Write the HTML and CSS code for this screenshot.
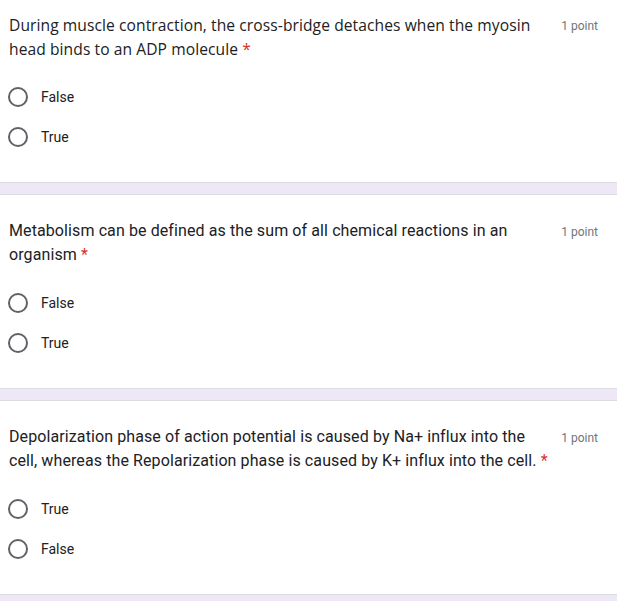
FILE: index.html
```html
<!DOCTYPE html>
<html>
<head>
<meta charset="utf-8">
<link rel="stylesheet" href="styles.css">
</head>
<body>
<div class="page">
  <div class="card">
    <div class="head">
      <div class="question q-sans">During muscle contraction, the cross-bridge detaches when the myosin head binds to an ADP molecule <span class="req">*</span></div>
      <div class="points">1 point</div>
    </div>
    <div class="options">
      <div class="option"><span class="radio"></span><span class="label">False</span></div>
      <div class="option"><span class="radio"></span><span class="label">True</span></div>
    </div>
  </div>
  <div class="band"></div>
  <div class="card">
    <div class="head">
      <div class="question">Metabolism can be defined as the sum of all chemical reactions in an organism <span class="req">*</span></div>
      <div class="points">1 point</div>
    </div>
    <div class="options">
      <div class="option"><span class="radio"></span><span class="label">False</span></div>
      <div class="option"><span class="radio"></span><span class="label">True</span></div>
    </div>
  </div>
  <div class="band"></div>
  <div class="card">
    <div class="head">
      <div class="question">Depolarization phase of action potential is caused by Na+ influx into the cell, whereas the Repolarization phase is caused by K+ influx into the cell. <span class="req">*</span></div>
      <div class="points">1 point</div>
    </div>
    <div class="options">
      <div class="option"><span class="radio"></span><span class="label">True</span></div>
      <div class="option"><span class="radio"></span><span class="label">False</span></div>
    </div>
  </div>
  <div class="band"></div>
</div>
</body>
</html>
```

FILE: styles.css
```css
html, body {
  margin: 0;
  padding: 0;
  background: #ffffff;
}
body {
  font-family: Roboto, "Liberation Sans", Arial, sans-serif;
  color: #202124;
  overflow: hidden;
}
.page {
  margin-top: -11px;
}
.card {
  background: #ffffff;
  padding: 24px 19px 25px 8px;
}
.head {
  display: flex;
  align-items: flex-start;
}
.question {
  flex: 1;
  min-width: 0;
  font-size: 16px;
  line-height: 24px;
  padding-left: 1px;
  padding-right: 4px;
  letter-spacing: 0.1px;
}
.q-sans {
  font-family: "Open Sans", Roboto, sans-serif;
  font-size: 15.6px;
  letter-spacing: 0.08px;
}
.req {
  color: #d93025;
}
.points {
  flex: none;
  font-size: 12px;
  line-height: 24px;
  color: #70757a;
  white-space: nowrap;
  padding-top: 1px;
}
.options {
  margin-top: 16px;
  display: flex;
  flex-direction: column;
}
.option {
  display: flex;
  align-items: center;
  height: 40px;
}
.radio {
  width: 16px;
  height: 16px;
  border: 2px solid #5f6368;
  border-radius: 50%;
  flex: none;
}
.label {
  margin-left: 13px;
  font-size: 14px;
  color: #202124;
}
.band {
  height: 11px;
  background: #ede7f6;
  border-top: 1px solid #dadce0;
  border-bottom: 1px solid #dadce0;
}
```
